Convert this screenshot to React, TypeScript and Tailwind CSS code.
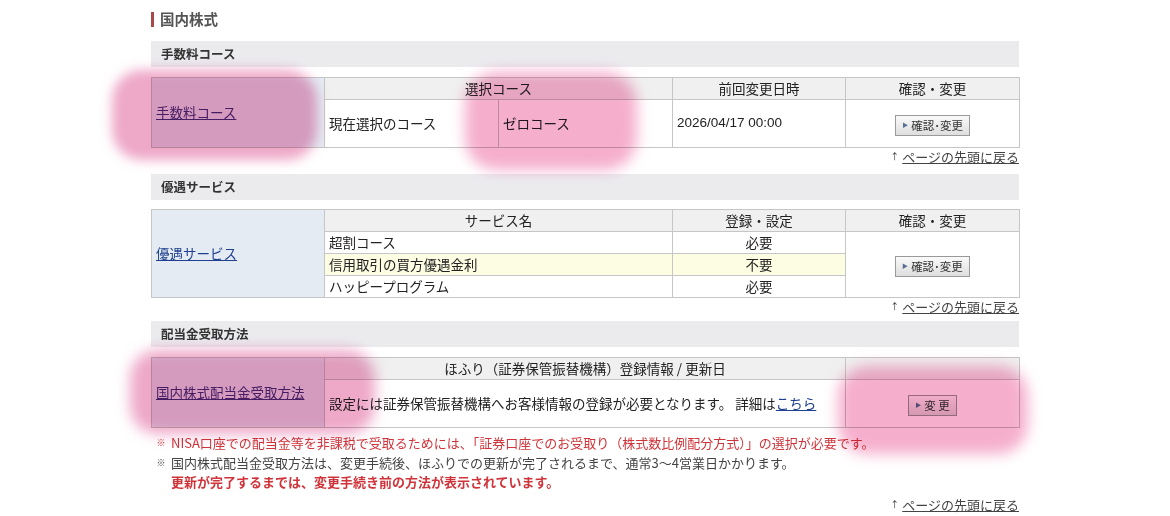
import React from "react";

const font = { fontFamily: '"Noto Sans CJK JP", "Noto Sans", sans-serif' };

function SectionHeader({ title }: { title: string }) {
	return (
		<div className="h-[26px] bg-[#ebebee] px-[10px] flex items-center text-[12.5px] font-bold text-[#333]">
			{title}
		</div>
	);
}

function SmallButton({ label }: { label: string }) {
	return (
		<button className="inline-flex items-center gap-[3px] h-[21px] px-[6px] border border-[#9a9a9a] bg-gradient-to-b from-[#fafafa] to-[#dedede] text-[11.5px] text-[#333] leading-none">
			<span className="text-[6px] text-[#5a6f94]">▶</span>
			{label}
		</button>
	);
}

function BackToTop() {
	return (
		<div className="flex justify-end items-center h-[18px] text-[13px] text-[#333]">
			<span className="text-[9px] mr-[3px]">↑</span>
			<a href="#" className="underline text-[#444]">
				ページの先頭に戻る
			</a>
		</div>
	);
}

const th = "border border-[#c6c6c6] bg-[#f0f0f0] font-normal h-[22px] text-center";
const td = "border border-[#c6c6c6] px-[4px]";

export default function App() {
	return (
		<div className="relative w-[1170px] h-[516px] bg-white overflow-hidden text-[13.5px] text-[#222]" style={font}>
			<div className="mx-auto w-[868px] pt-[9px]">
				<div className="flex items-center h-[20px] mb-[12px]">
					<span className="w-[3px] h-[15px] bg-[#a94a4a] mr-[6px]" />
					<span className="text-[14.5px] font-bold text-[#555]">国内株式</span>
				</div>

				{/* 手数料コース */}
				<SectionHeader title="手数料コース" />
				<table className="w-full border-collapse mt-[10px] table-fixed">
					<colgroup>
						<col className="w-[173px]" />
						<col className="w-[174px]" />
						<col className="w-[174px]" />
						<col className="w-[173px]" />
						<col className="w-[174px]" />
					</colgroup>
					<tbody>
						<tr>
							<td rowSpan={2} className={`${td} bg-[#e4ebf3]`}>
								<a href="#" className="underline text-[#4b2a7d]">
									手数料コース
								</a>
							</td>
							<th colSpan={2} className={th}>選択コース</th>
							<th className={th}>前回変更日時</th>
							<th className={th}>確認・変更</th>
						</tr>
						<tr className="h-[48px]">
							<td className={`${td} bg-white`}>現在選択のコース</td>
							<td className={`${td} bg-white`}>ゼロコース</td>
							<td className={`${td} bg-white`} style={{ fontFamily: '"Liberation Sans", sans-serif' }}>
								2026/04/17 00:00
							</td>
							<td className={`${td} bg-white text-center`}>
								<SmallButton label="確認･変更" />
							</td>
						</tr>
					</tbody>
				</table>
				<BackToTop />

				{/* 優遇サービス */}
				<div className="mt-[8px]">
					<SectionHeader title="優遇サービス" />
				</div>
				<table className="w-full border-collapse mt-[9px] table-fixed">
					<colgroup>
						<col className="w-[173px]" />
						<col className="w-[348px]" />
						<col className="w-[173px]" />
						<col className="w-[174px]" />
					</colgroup>
					<tbody>
						<tr>
							<td rowSpan={4} className={`${td} bg-[#e4ebf3]`}>
								<a href="#" className="underline text-[#1f3f8f]">
									優遇サービス
								</a>
							</td>
							<th className={th}>サービス名</th>
							<th className={th}>登録・設定</th>
							<th className={th}>確認・変更</th>
						</tr>
						<tr className="h-[22px]">
							<td className={`${td} bg-white`}>超割コース</td>
							<td className={`${td} bg-white text-center`}>必要</td>
							<td rowSpan={3} className={`${td} bg-white text-center`}>
								<SmallButton label="確認･変更" />
							</td>
						</tr>
						<tr className="h-[22px]">
							<td className={`${td} bg-[#fdfde3]`}>信用取引の買方優遇金利</td>
							<td className={`${td} bg-[#fdfde3] text-center`}>不要</td>
						</tr>
						<tr className="h-[22px]">
							<td className={`${td} bg-white`}>ハッピープログラム</td>
							<td className={`${td} bg-white text-center`}>必要</td>
						</tr>
					</tbody>
				</table>
				<BackToTop />

				{/* 配当金受取方法 */}
				<div className="mt-[5px]">
					<SectionHeader title="配当金受取方法" />
				</div>
				<table className="w-full border-collapse mt-[10px] table-fixed">
					<colgroup>
						<col className="w-[173px]" />
						<col className="w-[521px]" />
						<col className="w-[174px]" />
					</colgroup>
					<tbody>
						<tr>
							<td rowSpan={2} className={`${td} bg-[#e4ebf3]`}>
								<a href="#" className="underline text-[#4b2a7d]">
									国内株式配当金受取方法
								</a>
							</td>
							<th className={th}>ほふり（証券保管振替機構）登録情報 / 更新日</th>
							<th className={th}></th>
						</tr>
						<tr className="h-[48px]">
							<td className={`${td} bg-white`}>
								設定には証券保管振替機構へお客様情報の登録が必要となります。 詳細は
								<a href="#" className="underline text-[#1f3f8f]">
									こちら
								</a>
							</td>
							<td className={`${td} bg-white text-center`}>
								<SmallButton label="変 更" />
							</td>
						</tr>
					</tbody>
				</table>

				<div className="mt-[5px] text-[13px] leading-[19.5px]">
					<div className="flex text-[#d0343a]">
						<span className="w-[20px] text-[9px] text-center">※</span>
						<span>NISA口座での配当金等を非課税で受取るためには、「証券口座でのお受取り（株式数比例配分方式）」の選択が必要です。</span>
					</div>
					<div className="flex text-[#444]">
						<span className="w-[20px] text-[9px] text-center">※</span>
						<span>国内株式配当金受取方法は、変更手続後、ほふりでの更新が完了されるまで、通常3〜4営業日かかります。</span>
					</div>
					<div className="pl-[20px] text-[#d0343a] font-bold">
						更新が完了するまでは、変更手続き前の方法が表示されています。
					</div>
				</div>
				<div className="mt-[4px]">
					<BackToTop />
				</div>
			</div>

			{/* highlighter marks */}
			<div className="pointer-events-none absolute left-[112px] top-[70px] w-[205px] h-[90px] rounded-[30px] bg-[#e0609a] opacity-55 mix-blend-multiply blur-[6px]" />
			<div className="pointer-events-none absolute left-[465px] top-[72px] w-[172px] h-[98px] rounded-[32px] bg-[#ec5f9a] opacity-50 mix-blend-multiply blur-[7px]" />
			<div className="pointer-events-none absolute left-[130px] top-[350px] w-[245px] h-[84px] rounded-[28px] bg-[#e0609a] opacity-55 mix-blend-multiply blur-[7px]" />
			<div className="pointer-events-none absolute left-[838px] top-[366px] w-[190px] h-[88px] rounded-[30px] bg-[#ec5f9a] opacity-50 mix-blend-multiply blur-[7px]" />
		</div>
	);
}
